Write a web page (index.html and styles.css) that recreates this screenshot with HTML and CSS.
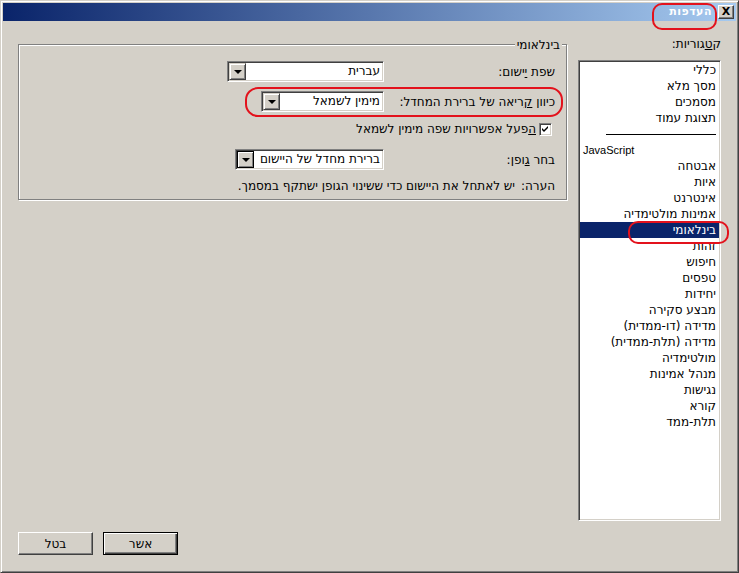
FILE: index.html
```html
<!DOCTYPE html>
<html lang="he">
<head>
<meta charset="utf-8">
<title>העדפות</title>
<link rel="stylesheet" href="styles.css">
</head>
<body>
<div class="window">
  <div class="titlebar">
    <span class="title">העדפות</span>
    <span class="close">X</span>
  </div>
  <div class="content">
    <div class="main" dir="rtl">
      <div class="group">
        <span class="legend">בינלאומי</span>
        <div class="rows">
          <div class="row row-1">
            <span class="label">שפת <u>י</u>ישום:</span>
            <div class="combo combo-lang">
              <span class="value">עברית</span>
              <span class="drop"><span class="tri"></span></span>
            </div>
          </div>
          <div class="row row-2">
            <span class="label">כיוון <u>ק</u>ריאה של ברירת המחדל:</span>
            <div class="combo combo-dir">
              <span class="value">מימין לשמאל</span>
              <span class="drop"><span class="tri"></span></span>
            </div>
          </div>
          <div class="row row-3">
            <span class="check">
              <svg width="7" height="7" viewBox="0 0 7 7"><path d="M0 2 L2 4 L6 0 L6 2 L2 6 L0 4 Z" fill="#000"/></svg>
            </span>
            <span class="check-text"><u>ה</u>פעל אפשרויות שפה מימין לשמאל</span>
          </div>
          <div class="row row-4">
            <span class="label">בחר <u>ג</u>ופן:</span>
            <div class="combo combo-font">
              <span class="value">ברירת מחדל של היישום</span>
              <span class="drop drop-focus"><span class="tri"></span></span>
            </div>
          </div>
          <div class="row row-5">
            <span class="note-head">הערה:</span>
            <span>יש לאתחל את היישום כדי ששינוי הגופן ישתקף במסמך.</span>
          </div>
        </div>
      </div>
      <div class="buttons">
        <span class="btn btn-default">אשר</span>
        <span class="btn">בטל</span>
      </div>
    </div>
    <div class="side" dir="rtl">
      <div class="cat-label">ק<u>ט</u>גוריות:</div>
      <div class="list">
        <div class="item">כללי</div>
        <div class="item">מסך מלא</div>
        <div class="item">מסמכים</div>
        <div class="item">תצוגת עמוד</div>
        <div class="item sep"><span class="sep-line"></span></div>
        <div class="item latin" dir="ltr">JavaScript</div>
        <div class="item">אבטחה</div>
        <div class="item">איות</div>
        <div class="item">אינטרנט</div>
        <div class="item">אמינות מולטימדיה</div>
        <div class="item selected">בינלאומי</div>
        <div class="item">זהות</div>
        <div class="item">חיפוש</div>
        <div class="item">טפסים</div>
        <div class="item">יחידות</div>
        <div class="item">מבצע סקירה</div>
        <div class="item">מדידה (דו-ממדית)</div>
        <div class="item">מדידה (תלת-ממדית)</div>
        <div class="item">מולטימדיה</div>
        <div class="item">מנהל אמינות</div>
        <div class="item">נגישות</div>
        <div class="item">קורא</div>
        <div class="item">תלת-ממד</div>
      </div>
    </div>
  </div>
  <span class="mark mark-title"></span>
  <span class="mark mark-dir"></span>
  <span class="mark mark-item"></span>
</div>
</body>
</html>
```

FILE: styles.css
```css
* { box-sizing: border-box; }
html, body { margin: 0; padding: 0; }
body {
  width: 739px;
  height: 573px;
  overflow: hidden;
  background: #d4d0c8;
  font-family: "DejaVu Sans", "Liberation Sans", sans-serif;
  font-size: 12px;
  color: #000;
}
u { text-decoration: underline; text-underline-offset: 1px; }

.window {
  position: relative;
  width: 739px;
  height: 573px;
  background: #d4d0c8;
  border: 1px solid;
  border-color: #d4d0c8 #404040 #404040 #d4d0c8;
  box-shadow: inset 1px 1px 0 #ffffff, inset -1px -1px 0 #808080;
  padding: 2px;
  display: flex;
  flex-direction: column;
}

.titlebar {
  height: 18px;
  flex: none;
  background: linear-gradient(to right, #0a246a, #a6caf0);
  display: flex;
  align-items: center;
  justify-content: flex-end;
  padding-right: 2px;
}
.title {
  color: #fff;
  font-weight: bold;
  font-size: 11px;
  letter-spacing: 0.5px;
  margin-right: 6px;
  line-height: 14px;
}
.close {
  width: 16px;
  height: 14px;
  background: #d4d0c8;
  border: 1px solid;
  border-color: #ffffff #404040 #404040 #ffffff;
  box-shadow: inset -1px -1px 0 #808080;
  display: flex;
  align-items: center;
  justify-content: center;
  font-weight: bold;
  font-size: 11px;
  line-height: 12px;
}

.content {
  flex: 1;
  display: flex;
  gap: 11px;
  padding: 16px 15px 15px 15px;
}
.main {
  width: 549px;
  display: flex;
  flex-direction: column;
}
.side {
  width: 143px;
}

/* group box */
.group {
  margin-top: 7px;
  height: 156px;
  border: 1px solid #808080;
  box-shadow: 1px 1px 0 #ffffff, inset 1px 1px 0 #ffffff;
}
.legend {
  display: block;
  width: max-content;
  margin: -7px 4px 0 0;
  padding: 0 2px;
  line-height: 14px;
  background: #d4d0c8;
}
.rows {
  padding-right: 11px;
}
.row {
  display: flex;
  align-items: center;
}
.row-1 { height: 21px; margin-top: 9px; }
.row-2 { height: 21px; margin-top: 9px; }
.row-3 { height: 14px; margin-top: 10px; }
.row-4 { height: 21px; margin-top: 13px; }
.row-5 { height: 14px; margin-top: 9px; }
.label { width: 171px; flex: none; }

.combo {
  height: 21px;
  display: flex;
  background: #fff;
  border: 1px solid;
  border-color: #808080 #ffffff #ffffff #808080;
  box-shadow: inset 1px 1px 0 #404040, inset -1px -1px 0 #d4d0c8;
  padding: 1px;
}
.combo-lang { width: 157px; }
.combo-dir { width: 123px; }
.combo-font { width: 149px; }
.value {
  flex: 1;
  line-height: 17px;
  padding-right: 2px;
  white-space: nowrap;
  overflow: hidden;
}
.drop {
  width: 17px;
  height: 17px;
  flex: none;
  background: #d4d0c8;
  border: 1px solid;
  border-color: #d4d0c8 #404040 #404040 #d4d0c8;
  box-shadow: inset 1px 1px 0 #ffffff, inset -1px -1px 0 #808080;
  display: flex;
  align-items: center;
  justify-content: center;
}
.drop-focus { outline: 1px solid #000; outline-offset: -1px; }
.tri {
  width: 0;
  height: 0;
  border-left: 4px solid transparent;
  border-right: 4px solid transparent;
  border-top: 4px solid #000;
}

.check {
  width: 13px;
  height: 13px;
  flex: none;
  margin-right: 3px;
  margin-left: 3px;
  background: #fff;
  border: 1px solid;
  border-color: #808080 #ffffff #ffffff #808080;
  box-shadow: inset 1px 1px 0 #404040, inset -1px -1px 0 #d4d0c8;
  display: flex;
  align-items: center;
  justify-content: center;
}
.note-head { margin-left: 6px; }

.buttons {
  margin-top: auto;
  display: flex;
  justify-content: flex-end;
  gap: 10px;
}
.btn {
  width: 75px;
  height: 23px;
  background: #d4d0c8;
  border: 1px solid;
  border-color: #ffffff #404040 #404040 #ffffff;
  box-shadow: inset -1px -1px 0 #808080;
  display: flex;
  align-items: center;
  justify-content: center;
}
.btn-default {
  border: 1px solid #000;
  box-shadow: inset 1px 1px 0 #ffffff, inset -1px -1px 0 #404040, inset -2px -2px 0 #808080;
}

/* categories */
.cat-label {
  line-height: 14px;
  height: 14px;
  margin-bottom: 9px;
}
.list {
  height: 461px;
  background: #fff;
  border: 1px solid;
  border-color: #808080 #ffffff #ffffff #808080;
  box-shadow: inset 1px 1px 0 #404040, inset -1px -1px 0 #d4d0c8;
  padding: 1px;
}
.item {
  height: 16px;
  line-height: 16px;
  padding: 0 3px;
  white-space: nowrap;
}
.item.latin {
  font-family: "Liberation Sans", "DejaVu Sans", sans-serif;
  font-size: 11px;
}
.item.selected {
  background: #0a246a;
  color: #fff;
}
.item.sep {
  display: flex;
  align-items: center;
}
.sep-line {
  display: block;
  width: 110px;
  height: 1px;
  background: #000;
}

/* red annotation marks */
.mark {
  position: absolute;
  border: 2px solid #e3121c;
  border-radius: 10px;
}
.mark-title { left: 651px; top: 2px; width: 65px; height: 27px; }
.mark-dir { left: 244px; top: 86px; width: 318px; height: 30px; border-radius: 13px; }
.mark-item { left: 627px; top: 220px; width: 101px; height: 23px; }
```
